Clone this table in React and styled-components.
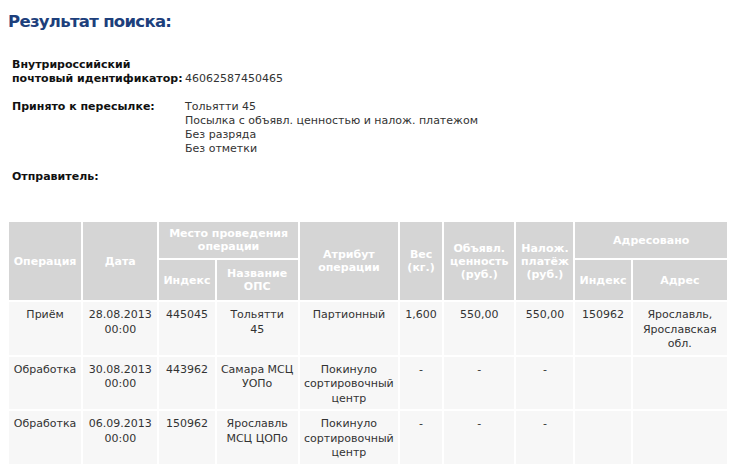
import React from "react";
import styled, { createGlobalStyle } from "styled-components";

const GlobalStyle = createGlobalStyle`
  html, body {
    margin: 0;
    padding: 0;
    background: #ffffff;
  }
  body {
    font-family: "DejaVu Sans", Verdana, sans-serif;
    font-size: 11px;
    color: #222;
  }
`;

const Page = styled.div`
  padding: 12px 0 0 8px;
`;

const Title = styled.h1`
  margin: 0 0 26px 0;
  font-family: "DejaVu Sans", Verdana, sans-serif;
  font-size: 16.5px;
  font-weight: bold;
  letter-spacing: -0.7px;
  color: #1d3f7c;
  line-height: 20px;
`;

const InfoGrid = styled.div`
  display: grid;
  grid-template-columns: 173px auto;
  row-gap: 13px;
  padding-left: 4px;
  line-height: 14.3px;
`;

const Label = styled.div`
  font-weight: bold;
  color: #111;
  align-self: ${(p) => (p.$bottom ? "end" : "start")};
`;

const Value = styled.div`
  color: #333;
  align-self: ${(p) => (p.$bottom ? "end" : "start")};
`;

const Table = styled.table`
  margin: 36px 0 0 -1px;
  border-collapse: separate;
  border-spacing: 2px;
  table-layout: fixed;
  width: 722px;
`;

const HeadCell = styled.th`
  background: #d5d5d5;
  color: #ffffff;
  font-weight: bold;
  font-size: 11px;
  line-height: 13px;
  text-align: center;
  vertical-align: middle;
  padding: ${(p) => (p.$sub ? "6px 2px" : "4px 2px")};
  height: 28px;
`;

const Cell = styled.td`
  background: #f7f7f7;
  color: #333;
  font-size: 11px;
  line-height: 14.5px;
  text-align: center;
  vertical-align: top;
  padding: 6px 3px 3px;
  height: 43px;
  white-space: pre-line;
`;

const cols = [72, 74, 55, 81, 98, 42, 70, 57, 55, 94];

const rows = [
  ["Приём", "28.08.2013\n00:00", "445045", "Тольятти\n45", "Партионный", "1,600", "550,00", "550,00", "150962", "Ярославль,\nЯрославская\nобл."],
  ["Обработка", "30.08.2013\n00:00", "443962", "Самара МСЦ\nУОПо", "Покинуло\nсортировочный\nцентр", "-", "-", "-", "", ""],
  ["Обработка", "06.09.2013\n00:00", "150962", "Ярославль\nМСЦ ЦОПо", "Покинуло\nсортировочный\nцентр", "-", "-", "-", "", ""],
  ["", "", "", "", "", "", "", "", "", ""],
];

export default function App() {
  return (
    <Page>
      <GlobalStyle />
      <Title>Результат поиска:</Title>
      <InfoGrid>
        <Label>
          Внутрироссийский
          <br />
          почтовый идентификатор:
        </Label>
        <Value $bottom>46062587450465</Value>
        <Label>Принято к пересылке:</Label>
        <Value>
          Тольятти 45
          <br />
          Посылка с объявл. ценностью и налож. платежом
          <br />
          Без разряда
          <br />
          Без отметки
        </Value>
        <Label>Отправитель:</Label>
        <Value />
      </InfoGrid>
      <Table>
        <colgroup>
          {cols.map((w, i) => (
            <col key={i} style={{ width: w }} />
          ))}
        </colgroup>
        <thead>
          <tr>
            <HeadCell rowSpan={2}>Операция</HeadCell>
            <HeadCell rowSpan={2}>Дата</HeadCell>
            <HeadCell colSpan={2}>Место проведения операции</HeadCell>
            <HeadCell rowSpan={2}>Атрибут операции</HeadCell>
            <HeadCell rowSpan={2}>Вес (кг.)</HeadCell>
            <HeadCell rowSpan={2}>Объявл. ценность (руб.)</HeadCell>
            <HeadCell rowSpan={2}>Налож. платёж (руб.)</HeadCell>
            <HeadCell colSpan={2}>Адресовано</HeadCell>
          </tr>
          <tr>
            <HeadCell $sub>Индекс</HeadCell>
            <HeadCell $sub>Название ОПС</HeadCell>
            <HeadCell $sub>Индекс</HeadCell>
            <HeadCell $sub>Адрес</HeadCell>
          </tr>
        </thead>
        <tbody>
          {rows.map((r, i) => (
            <tr key={i}>
              {r.map((c, j) => (
                <Cell key={j}>{c}</Cell>
              ))}
            </tr>
          ))}
        </tbody>
      </Table>
    </Page>
  );
}
